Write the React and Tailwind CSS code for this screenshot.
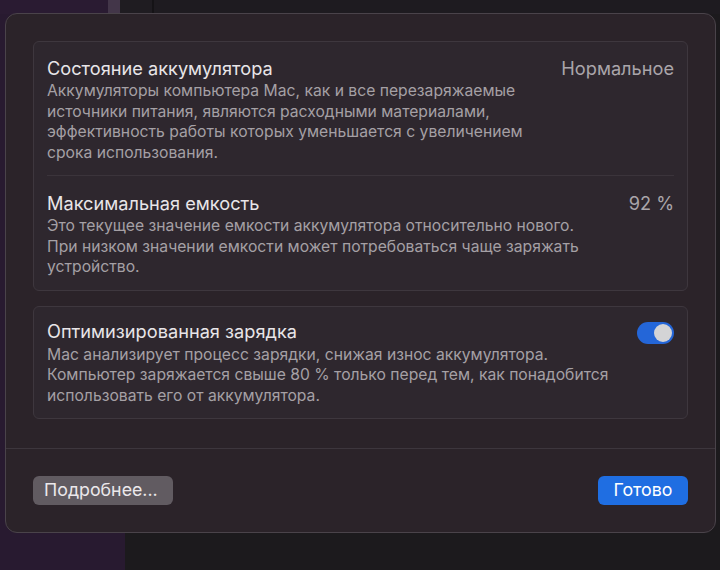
export default function App() {
  const font = { fontFamily: "Inter, 'Noto Sans', sans-serif" };
  return (
    <div className="relative w-[720px] h-[570px] overflow-hidden bg-[#1c1a1e]" style={font}>
      {/* desktop background */}
      <div className="flex h-full">
        <div className="w-[125px] h-full bg-[#281a30]" />
        <div className="flex-1 h-full bg-[#1c1a1d]" />
      </div>
      <div className="absolute left-0 top-0 w-[720px] h-[14px] flex">
        <div className="w-[108px] bg-[#2a1b32]" />
        <div className="w-[12px] bg-[#433649]" />
        <div className="w-[32px] bg-[#1f1c21]" />
        <div className="w-[2px] bg-[#151316]" />
        <div className="flex-1 bg-[#1e1b20]" />
      </div>

      {/* dialog */}
      <div className="absolute left-[5px] top-[13px] w-[711px] h-[520px] rounded-[12px] border border-[#4a434a] bg-[#2b2329] flex flex-col">
        <div className="px-[27px] pt-[27px] flex flex-col gap-[15px] h-[434px]">
          {/* card 1 */}
          <div className="rounded-[6px] border border-[#3e373e] bg-[#2e272e] px-[13px]">
            <div className="pt-[15px] pb-[12px] border-b border-[#3b343b]">
              <div className="flex justify-between items-center h-[23px]">
                <span className="text-[18.2px] text-[#e8e5e8]">Состояние аккумулятора</span>
                <span className="text-[18.2px] text-[#aaa5aa]">Нормальное</span>
              </div>
              <p className="mt-[1px] text-[15.7px] leading-[20.5px] text-[#a5a0a5] whitespace-nowrap">
                Аккумуляторы компьютера Mac, как и все перезаряжаемые<br />
                источники питания, являются расходными материалами,<br />
                эффективность работы которых уменьшается с увеличением<br />
                срока использования.
              </p>
            </div>
            <div className="pt-[16px] pb-[12px]">
              <div className="flex justify-between items-center h-[23px]">
                <span className="text-[18.2px] text-[#e8e5e8]">Максимальная емкость</span>
                <span className="text-[18.2px] text-[#aaa5aa]">92 %</span>
              </div>
              <p className="mt-[1px] text-[15.7px] leading-[20.5px] text-[#a5a0a5] whitespace-nowrap">
                Это текущее значение емкости аккумулятора относительно нового.<br />
                При низком значении емкости может потребоваться чаще заряжать<br />
                устройство.
              </p>
            </div>
          </div>
          {/* card 2 */}
          <div className="rounded-[6px] border border-[#3e373e] bg-[#2e272e] px-[13px] pt-[14px] pb-[12px]">
            <div className="flex justify-between items-center h-[23px]">
              <span className="text-[18.2px] text-[#e8e5e8]">Оптимизированная зарядка</span>
              <div className="mt-[2px] w-[37px] h-[22px] rounded-full bg-[#2466d8] flex items-center justify-end pr-[2px]">
                <div className="w-[18px] h-[18px] rounded-full bg-[#d4d4d6]" />
              </div>
            </div>
            <p className="mt-[1px] text-[15.7px] leading-[20.5px] text-[#a5a0a5] whitespace-nowrap">
              Mac анализирует процесс зарядки, снижая износ аккумулятора.<br />
              Компьютер заряжается свыше 80 % только перед тем, как понадобится<br />
              использовать его от аккумулятора.
            </p>
          </div>
        </div>
        <div className="border-t border-[#3d363d] flex-1 flex items-center justify-between px-[27px]">
          <button className="h-[29px] w-[140px] rounded-[6px] bg-[#615b61] text-[17.8px] text-[#ebe8eb] text-left pl-[11px]">
            Подробнее...
          </button>
          <button className="h-[29px] w-[90px] rounded-[6px] bg-[#1f6ee2] text-[17.8px] text-white">
            Готово
          </button>
        </div>
      </div>
    </div>
  );
}
